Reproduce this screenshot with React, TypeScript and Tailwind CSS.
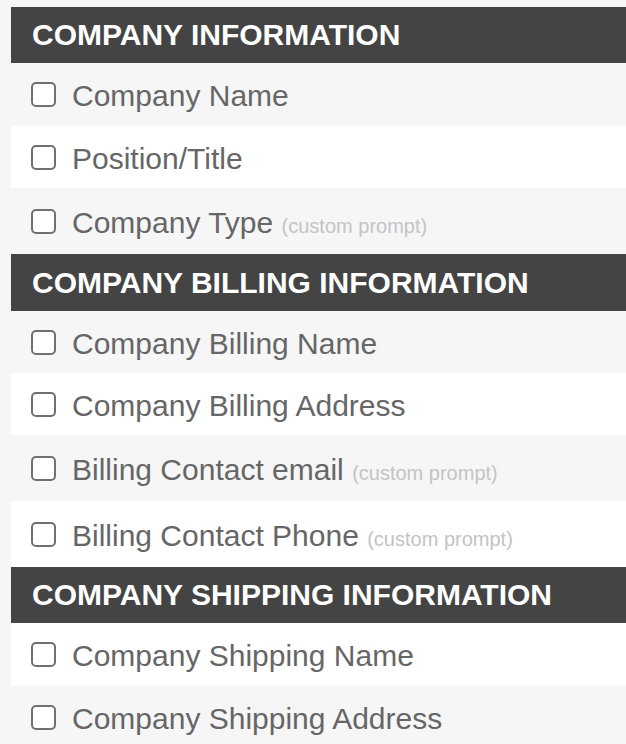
import React from "react";

type Row = { label: string; prompt?: boolean; white?: boolean; h: string };
type Section = { title: string; h: string; rows: Row[] };

const sections: Section[] = [
  {
    title: "COMPANY INFORMATION",
    h: "h-[56px]",
    rows: [
      { label: "Company Name", h: "h-[63px]" },
      { label: "Position/Title", white: true, h: "h-[62px]" },
      { label: "Company Type", prompt: true, h: "h-[66px]" },
    ],
  },
  {
    title: "COMPANY BILLING INFORMATION",
    h: "h-[57px]",
    rows: [
      { label: "Company Billing Name", h: "h-[62px]" },
      { label: "Company Billing Address", white: true, h: "h-[62px]" },
      { label: "Billing Contact email", prompt: true, h: "h-[66px]" },
      { label: "Billing Contact Phone", prompt: true, white: true, h: "h-[66px]" },
    ],
  },
  {
    title: "COMPANY SHIPPING INFORMATION",
    h: "h-[56px]",
    rows: [
      { label: "Company Shipping Name", white: true, h: "h-[63px]" },
      { label: "Company Shipping Address", h: "h-[62px]" },
    ],
  },
];

export default function App() {
  return (
    <div className="min-h-[744px] w-[626px] bg-[#f6f6f6] pl-[11px] pt-[7px] font-['Liberation_Sans',Arial,sans-serif] overflow-hidden">
      {sections.map((s) => (
        <div key={s.title}>
          <div className={`${s.h} flex items-center bg-[#444444] pl-[21px]`}>
            <span className="text-[30px] font-bold leading-none text-white">{s.title}</span>
          </div>
          {s.rows.map((r) => (
            <div
              key={r.label}
              className={`${r.h} flex items-center pl-[20px] ${r.white ? "bg-white" : "bg-[#f6f6f6]"}`}
            >
              <span className="box-border h-[25px] w-[25px] shrink-0 rounded-[5px] border-2 border-[#707070] bg-white" />
              <span className="ml-[16px] mt-[3px] whitespace-nowrap text-[30px] leading-none text-[#666666]">
                {r.label}
                {r.prompt && (
                  <>
                    {" "}
                    <span className="text-[20px] text-[#c4c4c4]">(custom prompt)</span>
                  </>
                )}
              </span>
            </div>
          ))}
        </div>
      ))}
    </div>
  );
}
